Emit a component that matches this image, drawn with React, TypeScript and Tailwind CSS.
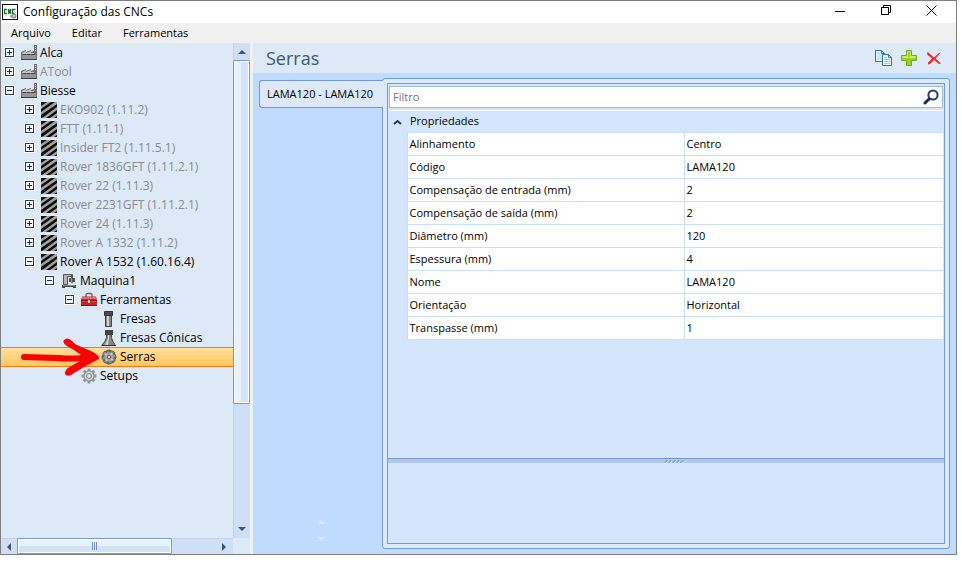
import { useState, type ReactNode } from "react";
import clsx from "clsx";

type IconName = "factory" | "stripes" | "machine" | "toolbox" | "cutter" | "cone" | "saw" | "gear";

type TreeItem = {
  label: string;
  level: number;
  icon: IconName;
  open?: boolean;
  leaf?: boolean;
  muted?: boolean;
};

const TREE: TreeItem[] = [
  { label: "Alca", level: 0, icon: "factory" },
  { label: "ATool", level: 0, icon: "factory", muted: true },
  { label: "Biesse", level: 0, icon: "factory", open: true },
  { label: "EKO902 (1.11.2)", level: 1, icon: "stripes", muted: true },
  { label: "FTT (1.11.1)", level: 1, icon: "stripes", muted: true },
  { label: "Insider FT2 (1.11.5.1)", level: 1, icon: "stripes", muted: true },
  { label: "Rover 1836GFT (1.11.2.1)", level: 1, icon: "stripes", muted: true },
  { label: "Rover 22 (1.11.3)", level: 1, icon: "stripes", muted: true },
  { label: "Rover 2231GFT (1.11.2.1)", level: 1, icon: "stripes", muted: true },
  { label: "Rover 24 (1.11.3)", level: 1, icon: "stripes", muted: true },
  { label: "Rover A 1332 (1.11.2)", level: 1, icon: "stripes", muted: true },
  { label: "Rover A 1532 (1.60.16.4)", level: 1, icon: "stripes", open: true },
  { label: "Maquina1", level: 2, icon: "machine", open: true },
  { label: "Ferramentas", level: 3, icon: "toolbox", open: true },
  { label: "Fresas", level: 4, icon: "cutter", leaf: true },
  { label: "Fresas Cônicas", level: 4, icon: "cone", leaf: true },
  { label: "Serras", level: 4, icon: "saw", leaf: true },
  { label: "Setups", level: 3, icon: "gear", leaf: true },
];

const INDENT = ["pl-[3px]", "pl-[23px]", "pl-[43px]", "pl-[63px]", "pl-[83px]"];

const PROPERTIES = [
  ["Alinhamento", "Centro"],
  ["Código", "LAMA120"],
  ["Compensação de entrada (mm)", "2"],
  ["Compensação de saída (mm)", "2"],
  ["Diâmetro (mm)", "120"],
  ["Espessura (mm)", "4"],
  ["Nome", "LAMA120"],
  ["Orientação", "Horizontal"],
  ["Transpasse (mm)", "1"],
];

const GEAR_ANGLES = [0, 45, 90, 135, 180, 225, 270, 315];

function TreeIcon({ name }: { name: IconName }) {
  return (
    <svg className="size-4 shrink-0" viewBox="0 0 16 16" aria-hidden="true">
      {name === "factory" && (
        <>
          <path d="M13 0h3v15H0V7l5-2v2l5-2v2l3-1z" fill="#6f6f6f" />
          <path d="M1 8l4-2v2l5-2v2h3v1H1z" fill="#c8c8c8" />
          <path d="M14 1.500h1M14 3.500h1M14 5.500h1" stroke="#ddd" />
          <path d="M1 10h14v4H1z" fill="#969696" />
          <path d="M2 9.500h3M6 9.500h3M10 9.500h4M0 14.500h16" stroke="#404040" />
        </>
      )}
      {name === "stripes" && (
        <>
          <path d="M0 0h16v16H0z" fill="#0b0b0b" />
          <path d="M0 4 6 0h4L0 7zM0 10 14 0h2v2L0 13zM1 16 16 5v3L5 16zM9 16l7-5v3l-3 2z" fill="#a2a2a0" />
        </>
      )}
      {name === "machine" && (
        <>
          <path d="M2.500 1.500h9v2h-5v8h-4z" fill="#b5b5b5" stroke="#555" />
          <path d="M10 2h2v3h-2z" fill="#555" />
          <path d="M8 5h6v4h-2l-1 2-1-2H8z" fill="#555" />
          <path d="M10 5h1v4h-1z" fill="#999" />
          <path d="M1 12h14v3h-3v-1H4v1H1z" fill="#484848" />
          <path d="M2 12.500h12" stroke="#8d8d8d" />
        </>
      )}
      {name === "toolbox" && (
        <>
          <path d="M5 5V3q0-1.500 1.500-1.500h3Q11 1.500 11 3v2" fill="none" stroke="#5e6c76" strokeWidth="1.400" />
          <path d="M1 4.500h14l1 4V14H0V8.500z" fill="#cb211f" />
          <path d="M1 5h14v2H1z" fill="#ed6661" />
          <path d="M0 8.500h16M0 13.500h16" stroke="#94100f" />
          <path d="M1 9.500h14" stroke="#e5403b" />
          <path d="M7 8h2v3H7z" fill="#ededed" />
        </>
      )}
      {name === "cutter" && (
        <>
          <path d="M4.500 4.500h6v11h-6z" fill="#858585" stroke="#444" />
          <path d="M6 5h2v10H6z" fill="#d2d2d2" />
          <path d="M3.500.500h8v4h-8z" fill="#4b4b4b" stroke="#333" />
        </>
      )}
      {name === "cone" && (
        <>
          <path d="M5.500 4.500h5v3q.500 4 4 8h-14q4-4 5-8z" fill="#858585" stroke="#484848" />
          <path d="M7 5h1v4l-1 6H4l3-7z" fill="#d0d0d0" />
          <path d="M4 0h8v5H4z" fill="#444" />
          <path d="M1 15.500h14" stroke="#333" />
        </>
      )}
      {name === "saw" && (
        <>
          {GEAR_ANGLES.map((a) => (
            <path key={a} d="M4 4Q5 .500 9 .800L10.500 3 8 4z" fill="#8e8e8e" stroke="#505050" strokeWidth=".800" transform={`rotate(${a} 8 8)`} />
          ))}
          <circle cx="8" cy="8" r="4.800" fill="#a6a6a6" />
          <path d="M4 5q2 0 2.500 2M5 12q0-2 2-2.500M12 11q-2 0-2.500-2M11 4q0 2-2 2.500" fill="none" stroke="#dedede" />
          <circle cx="8" cy="8" r="1.800" fill="#ffd477" stroke="#505050" />
        </>
      )}
      {name === "gear" && (
        <>
          <g fill="#969696">
            {GEAR_ANGLES.map((a) => (
              <path key={a} d="M6.500.500h3v3h-3z" transform={`rotate(${a} 8 8)`} />
            ))}
          </g>
          <circle cx="8" cy="8" r="5" fill="#d0d4d9" stroke="#949494" strokeWidth="1.200" />
          <circle cx="8" cy="8" r="2.300" fill="#dde9f7" stroke="#929292" strokeWidth="1.200" />
        </>
      )}
    </svg>
  );
}

function Expander({ open, label, onClick }: { open: boolean; label: string; onClick: () => void }) {
  return (
    <button type="button" aria-label={label} aria-expanded={open} onClick={onClick} className="size-[11px] shrink-0">
      <svg viewBox="0 0 11 11" className="size-[11px]">
        <rect width="11" height="11" rx="1" fill="#fff" />
        <rect x="1.500" y="1.500" width="8" height="8" fill="#f3f7fd" stroke="#233d70" />
        <path d={open ? "M3 5.500h5" : "M3 5.500h5M5.500 3v5"} stroke="#1d2f63" />
      </svg>
    </button>
  );
}

function RedArrow() {
  return (
    <svg className="pointer-events-none absolute top-1/2 left-[18px] h-[38px] w-[84px] -translate-y-1/2" viewBox="0 0 84 38" aria-hidden="true">
      <path
        d="M5 16 40 17Q54 18 62 17Q56 12 48 8Q43 5 45 2Q48-1 52 2L56 6Q60 8 72 13Q78 16 80 19Q81 21 78 22Q72 25 65 29Q60 32 52 37Q48 39 46 36Q45 33 49 30L61 23Q50 24 36 23L5 22Q2 22 2 19Q2 16 5 16Z"
        fill="#fb0007"
      />
    </svg>
  );
}

function Triangle({ d, className }: { d: string; className?: string }) {
  return (
    <svg viewBox="0 0 8 8" className={clsx("size-2", className)} aria-hidden="true">
      <path d={d} fill="currentColor" />
    </svg>
  );
}

function IconButton({ label, children, className }: { label: string; children: ReactNode; className?: string }) {
  return (
    <button type="button" aria-label={label} className={clsx("flex items-center justify-center", className)}>
      {children}
    </button>
  );
}

function TitleBar() {
  return (
    <header className="flex h-[22px] shrink-0 items-center bg-white pr-0.5 pl-px">
      <svg viewBox="0 0 16 16" className="size-4" aria-hidden="true">
        <rect x=".500" y=".500" width="15" height="15" fill="#fff" stroke="#111" />
        <path d="M5 5.500H2.500v4H5M6.500 10V5l2 5V5M13.500 5.500h-3v4h2" fill="none" stroke="#17752c" strokeWidth="1.300" />
        <path d="M8 11h6v3H8z" fill="#b9b9b9" />
        <circle cx="12" cy="12" r="2" fill="#ccc" stroke="#777" />
      </svg>
      <h1 className="ml-[5px] text-xs">Configuração das CNCs</h1>
      <div className="ml-auto flex h-full">
        <IconButton label="Minimizar" className="w-[46px]">
          <svg viewBox="0 0 10 10" className="size-[10px]"><path d="M0 4.500h10" stroke="#000" /></svg>
        </IconButton>
        <IconButton label="Restaurar" className="w-[45px] pb-1">
          <svg viewBox="0 0 10 10" className="size-[10px]">
            <path d="M.500 2.500h7v7h-7zM2.500 2.500v-2h7v7h-2" fill="none" stroke="#000" />
          </svg>
        </IconButton>
        <IconButton label="Fechar" className="w-[46px] pb-[3px]">
          <svg viewBox="0 0 11 11" className="size-[11px]"><path d="m.500.500 10 10m0-10-10 10" stroke="#000" /></svg>
        </IconButton>
      </div>
    </header>
  );
}

function MachineTree() {
  const [selected, setSelected] = useState("Serras");
  const [toggled, setToggled] = useState<Record<string, boolean>>({});

  return (
    <aside className="flex w-[249px] shrink-0 flex-col bg-[#dde9f7]">
      <div className="flex min-h-0 flex-1">
        <ul className="min-w-0 flex-1">
          {TREE.map((item) => {
            const active = item.label === selected;
            const open = toggled[item.label] ?? !!item.open;
            return (
              <li
                key={item.label}
                className={clsx(
                  "relative flex items-center",
                  INDENT[item.level],
                  active ? "-mb-px h-5 border-y border-[#f57c12] bg-linear-to-b from-[#ffdf9a] to-[#ffc65c]" : "h-[19px]",
                )}
              >
                {item.leaf ? (
                  <span className="w-[11px] shrink-0" />
                ) : (
                  <Expander open={open} label={item.label} onClick={() => setToggled({ ...toggled, [item.label]: !open })} />
                )}
                <button
                  type="button"
                  onClick={() => setSelected(item.label)}
                  className={clsx("ml-1.5 flex items-center gap-[3px] text-xs whitespace-nowrap", item.muted && "text-[#898c90]")}
                >
                  <TreeIcon name={item.icon} />
                  {item.label}
                </button>
                {item.icon === "saw" && <RedArrow />}
              </li>
            );
          })}
        </ul>
        <div className="flex w-[17px] flex-col border-l border-[#bfd2ee] bg-[#cfdff5] text-[#46536f]">
          <div className="flex h-[17px] items-center justify-center"><Triangle d="M0 6h8L4 2z" /></div>
          <div className="-ml-px h-[344px] rounded-[1px] border border-[#7a99c6] bg-linear-to-r from-[#e8f1fc] from-50% to-[#d3e2f6] to-50% shadow-[inset_0_0_0_1px_#fff]" />
          <div className="mt-auto flex h-[18px] items-center justify-center"><Triangle d="M0 2h8L4 6z" /></div>
        </div>
      </div>
      <div className="flex h-4 shrink-0">
        <div className="flex min-w-0 flex-1 items-center border-t border-[#bfd2ee] bg-[#cfdff5] text-[#46536f]">
          <div className="flex w-4 justify-center"><Triangle d="M6 0v8L2 4z" /></div>
          <div className="-mt-px flex h-4 w-[155px] items-center justify-center gap-px rounded-[1px] border border-[#7a99c6] bg-linear-to-b from-[#e8f1fc] from-50% to-[#d3e2f6] to-50% shadow-[inset_0_0_0_1px_#fff]">
            <i className="h-2 w-px bg-[#7192c4]" />
            <i className="h-2 w-px bg-[#7192c4]" />
            <i className="h-2 w-px bg-[#7192c4]" />
          </div>
          <Triangle d="M2 0v8l4-4z" className="mr-[5px] ml-auto" />
        </div>
        <div className="w-[17px]" />
      </div>
    </aside>
  );
}

function PageHeader() {
  return (
    <div className="flex h-[30px] shrink-0 items-center bg-[#dde9f7] pr-3.5 pl-[13px]">
      <h2 className="text-lg text-[#3d5777]">Serras</h2>
      <div className="ml-auto flex items-center gap-[9px]">
        <IconButton label="Duplicar">
          <svg viewBox="0 0 17 16" className="h-4 w-[17px]">
            <path d="M.500.500h6l3 3v8h-9z" fill="#eef8fe" stroke="#1c7cb0" />
            <path d="M2 3h3M2 5h5M2 7h5M2 9h5" stroke="#a9cde3" />
            <path d="M7.500 4.500h6l3 3v8h-9z" fill="#f5fbff" stroke="#1c7cb0" />
            <path d="M13.500 4.500v3h3M6.500.500v3h3" fill="none" stroke="#1c7cb0" />
            <path d="M9 7.500h3M9 9.500h6M9 11.500h6M9 13.500h6" stroke="#9cc8e2" />
          </svg>
        </IconButton>
        <IconButton label="Adicionar">
          <svg viewBox="0 0 16 16" className="size-4">
            <path d="M5.500.500h5v5h5v5h-5v5h-5v-5h-5v-5h5z" fill="#98cf22" stroke="#73a81b" />
            <path d="M6.500 7V1.500h3v5h5v1h-13v-1h5" fill="none" stroke="#c9ea79" />
          </svg>
        </IconButton>
        <IconButton label="Excluir">
          <svg viewBox="0 0 16 16" className="size-4">
            <path d="M1 2.500q1-1 3 1.500l4 3.500L13 3l2-.500L9.500 8.500l4.500 4 1 1-2 .500-5-4L4 14l-2 .500 0-2 4-4L1.500 5z" fill="#f42a2a" />
          </svg>
        </IconButton>
      </div>
    </div>
  );
}

function PropertyGrid() {
  const [filter, setFilter] = useState("");
  const [expanded, setExpanded] = useState(true);
  const rows = PROPERTIES.filter(([name]) => name.toLowerCase().includes(filter.toLowerCase()));

  return (
    <div className="flex flex-1 flex-col border border-[#709bd5] bg-[#d5e6fc]">
      <div className="min-h-0 flex-1 px-px pt-0.5">
        <label className="flex h-[22px] items-center border border-[#9abbe9] bg-white pr-[3px] pl-[3px]">
          <input
            aria-label="Filtro"
            placeholder="Filtro"
            value={filter}
            onChange={(event) => setFilter(event.target.value)}
            className="min-w-0 flex-1 text-[11px] outline-none placeholder:text-[#747078]"
          />
          <svg viewBox="0 0 16 16" className="size-4" aria-hidden="true">
            <circle cx="10" cy="6" r="4.600" fill="#fff" stroke="#24406c" strokeWidth="2" />
            <path d="m6 10-4 4" stroke="#142c53" strokeWidth="3" strokeLinecap="round" />
          </svg>
        </label>
        <table className="mt-0.5 w-full table-fixed border-collapse text-left text-[11px]">
          <colgroup>
            <col className="w-[18px]" />
            <col className="w-1/2" />
            <col />
          </colgroup>
          <thead>
            <tr className="h-[22px] border-t border-white">
              <th colSpan={3} className="p-0 font-normal">
                <button type="button" aria-expanded={expanded} onClick={() => setExpanded(!expanded)} className="flex w-full items-center pl-1">
                  <svg viewBox="0 0 9 6" className="h-1.5 w-[9px]" aria-hidden="true">
                    <path d="M1 5 4.500 2 8 5" fill="none" stroke="#193a70" strokeWidth="2" />
                  </svg>
                  <span className="ml-2">Propriedades</span>
                </button>
              </th>
            </tr>
          </thead>
          <tbody>
            {expanded &&
              rows.map(([name, value]) => (
                <tr key={name} className="h-[23px]">
                  <td className="p-0" />
                  <th scope="row" className="border border-[#cddff7] bg-white p-0 pl-0.5 font-normal">{name}</th>
                  <td className="border border-r-0 border-[#cddff7] bg-white p-0 pl-0.5">{value}</td>
                </tr>
              ))}
          </tbody>
        </table>
      </div>
      <div className="flex h-[5px] shrink-0 items-center justify-center border-t border-[#709bd5] bg-[#b1c7e8] pl-[18px]">
        <svg viewBox="0 0 20 3" className="h-[3px] w-5" aria-hidden="true">
          <path d="m1 3 2-2m2 2 2-2m2 2 2-2m2 2 2-2m2 2 2-2" stroke="#eef5ff" />
          <path d="m0 2.500 2-2m2 2 2-2m2 2 2-2m2 2 2-2m2 2 2-2" stroke="#1f68c2" />
        </svg>
      </div>
      <div className="h-20 shrink-0" />
    </div>
  );
}

export default function App() {
  return (
    <div className="h-screen bg-white pr-[5px] pb-[11px] font-['Open_Sans','Noto_Sans',sans-serif] text-black">
      <div className="flex h-full flex-col overflow-hidden border border-[#7f7f7f] bg-[#f0f0f0]">
        <TitleBar />
        <nav className="flex h-5 shrink-0 items-center gap-[21px] pl-[10px] text-[11px]">
          <button type="button">Arquivo</button>
          <button type="button">Editar</button>
          <button type="button">Ferramentas</button>
        </nav>
        <div className="flex min-h-0 flex-1 gap-[3px]">
          <MachineTree />
          <main className="flex min-w-0 flex-1 flex-col bg-[#bfdbff]">
            <PageHeader />
            <div className="flex min-h-0 flex-1 pt-[5px] pr-1.5 pb-[5px] pl-1.5">
              <div className="flex w-[123px] shrink-0 flex-col items-center pt-0.5">
                <button
                  type="button"
                  className="relative z-10 -mr-px h-7 w-[124px] self-start rounded-l-[3px] border border-r-0 border-[#709bd5] bg-[#dde9f7] pl-[7px] text-left text-[11px] whitespace-nowrap"
                >
                  LAMA120 - LAMA120
                </button>
                <div className="mt-auto mb-1.5 flex flex-col gap-[9px] text-[#dce9fc]">
                  <IconButton label="Anterior"><Triangle d="M0 6h8L4 2z" /></IconButton>
                  <IconButton label="Próximo"><Triangle d="M0 2h8L4 6z" /></IconButton>
                </div>
              </div>
              <section className="flex min-w-0 flex-1 rounded-[3px] border border-[#709bd5] bg-[#dde9f7] p-1">
                <PropertyGrid />
              </section>
            </div>
          </main>
        </div>
      </div>
    </div>
  );
}
